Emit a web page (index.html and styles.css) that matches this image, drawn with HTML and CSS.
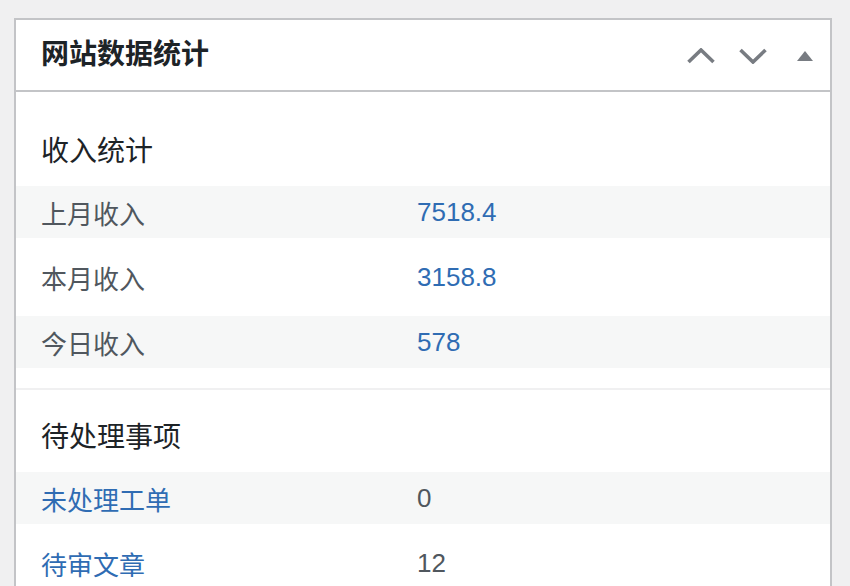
FILE: index.html
```html
<!DOCTYPE html>
<html lang="zh-CN">
<head>
<meta charset="utf-8">
<title>网站数据统计</title>
<link rel="stylesheet" href="styles.css">
</head>
<body>
<div class="postbox">
  <div class="postbox-header">
    <h2 class="title">网站数据统计</h2>
    <div class="handles">
      <svg class="chev" width="28" height="16" viewBox="0 0 28 16"><polyline points="1.5,14 14,2 26.5,14" fill="none" stroke="#787c82" stroke-width="3.6"/></svg>
      <svg class="chev" width="28" height="16" viewBox="0 0 28 16"><polyline points="1.5,2 14,14 26.5,2" fill="none" stroke="#787c82" stroke-width="3.6"/></svg>
      <svg class="tri" width="16" height="10" viewBox="0 0 16 10"><polygon points="8,0 16,10 0,10" fill="#787c82"/></svg>
    </div>
  </div>
  <div class="inside">
    <section class="group">
      <h3 class="group-title">收入统计</h3>
      <div class="row alt"><span class="label">上月收入</span><a class="value link" href="#">7518.4</a></div>
      <div class="row"><span class="label">本月收入</span><a class="value link" href="#">3158.8</a></div>
      <div class="row alt"><span class="label">今日收入</span><a class="value link" href="#">578</a></div>
    </section>
    <section class="group last">
      <h3 class="group-title">待处理事项</h3>
      <div class="row alt"><a class="label link" href="#">未处理工单</a><span class="value">0</span></div>
      <div class="row"><a class="label link" href="#">待审文章</a><span class="value">12</span></div>
    </section>
  </div>
</div>
</body>
</html>
```
FILE: styles.css
```css
html, body {
  margin: 0;
  padding: 0;
  background: #f0f0f1;
  height: 586px;
  overflow: hidden;
}
body {
  font-family: "Liberation Sans", "Noto Sans CJK SC", sans-serif;
  color: #1d2327;
}
.postbox {
  margin: 18px 0 0 14px;
  width: 818px;
  box-sizing: border-box;
  border: 2px solid #c3c4c7;
  background: #fff;
}
.postbox-header {
  height: 72px;
  box-sizing: border-box;
  border-bottom: 2px solid #c3c4c7;
  display: flex;
  align-items: center;
  justify-content: space-between;
  padding: 0 17px 0 25px;
}
.title {
  margin: 0;
  font-size: 28px;
  font-weight: 700;
  line-height: 36px;
  color: #1d2327;
}
.handles {
  display: flex;
  align-items: center;
  margin-top: 2px;
}
.chev { display: block; margin-right: 24px; }
.chev + .chev { margin-right: 30px; }
.tri { display: block; margin-top: -1px; }
.inside {
  padding-top: 12px;
}
.group {
  padding: 30px 0 20px;
  border-bottom: 2px solid #f0f0f1;
}
.group.last { border-bottom: none; }
.group-title {
  margin: 0 0 16px;
  padding-left: 25px;
  font-size: 28px;
  font-weight: 400;
  line-height: 36px;
  color: #1d2327;
}
.row {
  height: 52px;
  display: flex;
  align-items: center;
  padding-left: 25px;
  margin-bottom: 13px;
  font-size: 26px;
}
.row:last-child { margin-bottom: 0; }
.row.alt { background: #f6f7f7; }
.label {
  width: 376px;
  color: #50575e;
  text-decoration: none;
}
.value {
  color: #50575e;
  text-decoration: none;
}
.link { color: #2f6cb3; }
```
